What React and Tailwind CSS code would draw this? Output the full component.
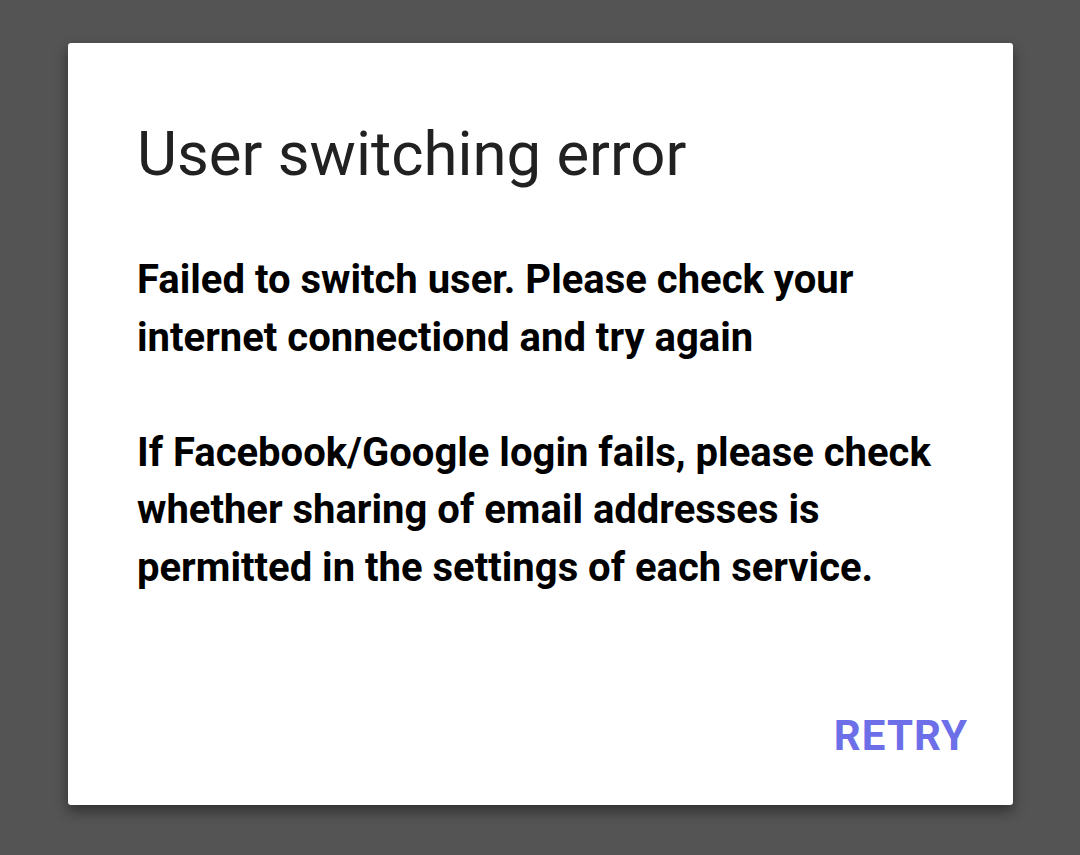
import React from 'react'

export default function App() {
  return (
    <div className="w-[1080px] h-[855px] bg-[#545454] pt-[43px] pl-[68px]" style={{ fontFamily: 'Roboto, "Noto Sans", sans-serif' }}>
      <div className="w-[945px] h-[762px] bg-white rounded-[3px] shadow-[0_6px_14px_rgba(0,0,0,0.45)] flex flex-col px-[69px]">
        <h1 className="mt-[74px] text-[61.7px] leading-[75px] text-[#212121] font-normal">User switching error</h1>
        <div className="mt-[59px] text-[40px] leading-[57.5px] font-bold text-black">
          <p>Failed to switch user. Please check your internet connectiond and try again</p>
          <p className="mt-[57.5px]">If Facebook/Google login fails, please check whether sharing of email addresses is permitted in the settings of each service.</p>
        </div>
        <div className="mt-auto mb-[38px] flex justify-end">
          <button className="text-[42px] font-bold text-[#6c6fe8] tracking-wide mr-[-24px]">RETRY</button>
        </div>
      </div>
    </div>
  )
}
